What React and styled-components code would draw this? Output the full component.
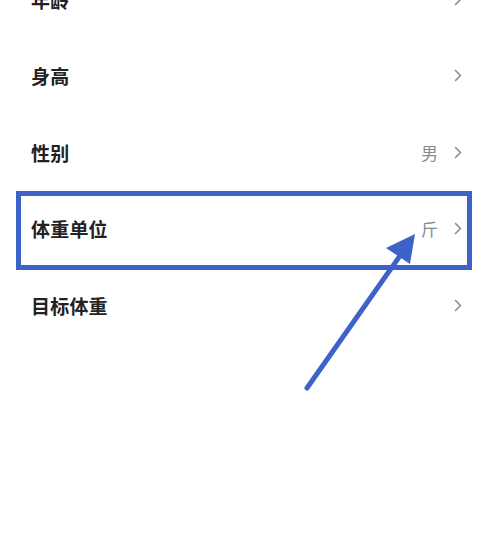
import React from "react";
import styled, { createGlobalStyle } from "styled-components";

const Global = createGlobalStyle`
  html, body { margin: 0; padding: 0; background: #fff; }
  body { font-family: "Noto Sans CJK SC", "Noto Sans", sans-serif; overflow: hidden; }
`;

const Page = styled.div`
  position: relative;
  width: 483px;
  height: 537px;
  overflow: hidden;
  background: #ffffff;
`;

const List = styled.div`
  display: flex;
  flex-direction: column;
  margin-top: -39px;
`;

const Row = styled.div`
  position: relative;
  height: 76.5px;
  display: flex;
  align-items: center;
  padding: 0 21px 0 31px;
`;

const Label = styled.div`
  flex: 1;
  font-size: 19px;
  font-weight: 700;
  color: #222;
  letter-spacing: 0.2px;
`;

const Value = styled.span`
  font-size: 17px;
  color: #8a8a8a;
  margin-right: 16px;
`;

const Chevron = styled.svg`
  width: 8px;
  height: 13px;
  display: block;
`;

const Highlight = styled.div`
  position: absolute;
  left: 16px;
  right: 11px;
  top: 0px;
  bottom: -3px;
  border: 5.5px solid #3d63c9;
  pointer-events: none;
`;

const ArrowLayer = styled.svg`
  position: absolute;
  left: 0;
  top: 0;
  width: 483px;
  height: 537px;
  pointer-events: none;
`;

const rows = [
  { label: "年龄" },
  { label: "身高" },
  { label: "性别", value: "男" },
  { label: "体重单位", value: "斤", highlight: true },
  { label: "目标体重" },
];

export default function App() {
  return (
    <Page>
      <Global />
      <List>
        {rows.map((r) => (
          <Row key={r.label}>
            <Label>{r.label}</Label>
            {r.value && <Value>{r.value}</Value>}
            <Chevron viewBox="0 0 8 13">
              <path d="M1.5 1.5 L6.5 6.5 L1.5 11.5" fill="none" stroke="#8c8c8c" strokeWidth="1.6" strokeLinecap="round" strokeLinejoin="round" />
            </Chevron>
            {r.highlight && <Highlight />}
          </Row>
        ))}
      </List>
      <ArrowLayer viewBox="0 0 483 537">
        <line x1="307" y1="388" x2="409" y2="243" stroke="#3d63c9" strokeWidth="5" strokeLinecap="round" />
        <polygon points="415,234 386,248 410,264" fill="#3d63c9" />
      </ArrowLayer>
    </Page>
  );
}
